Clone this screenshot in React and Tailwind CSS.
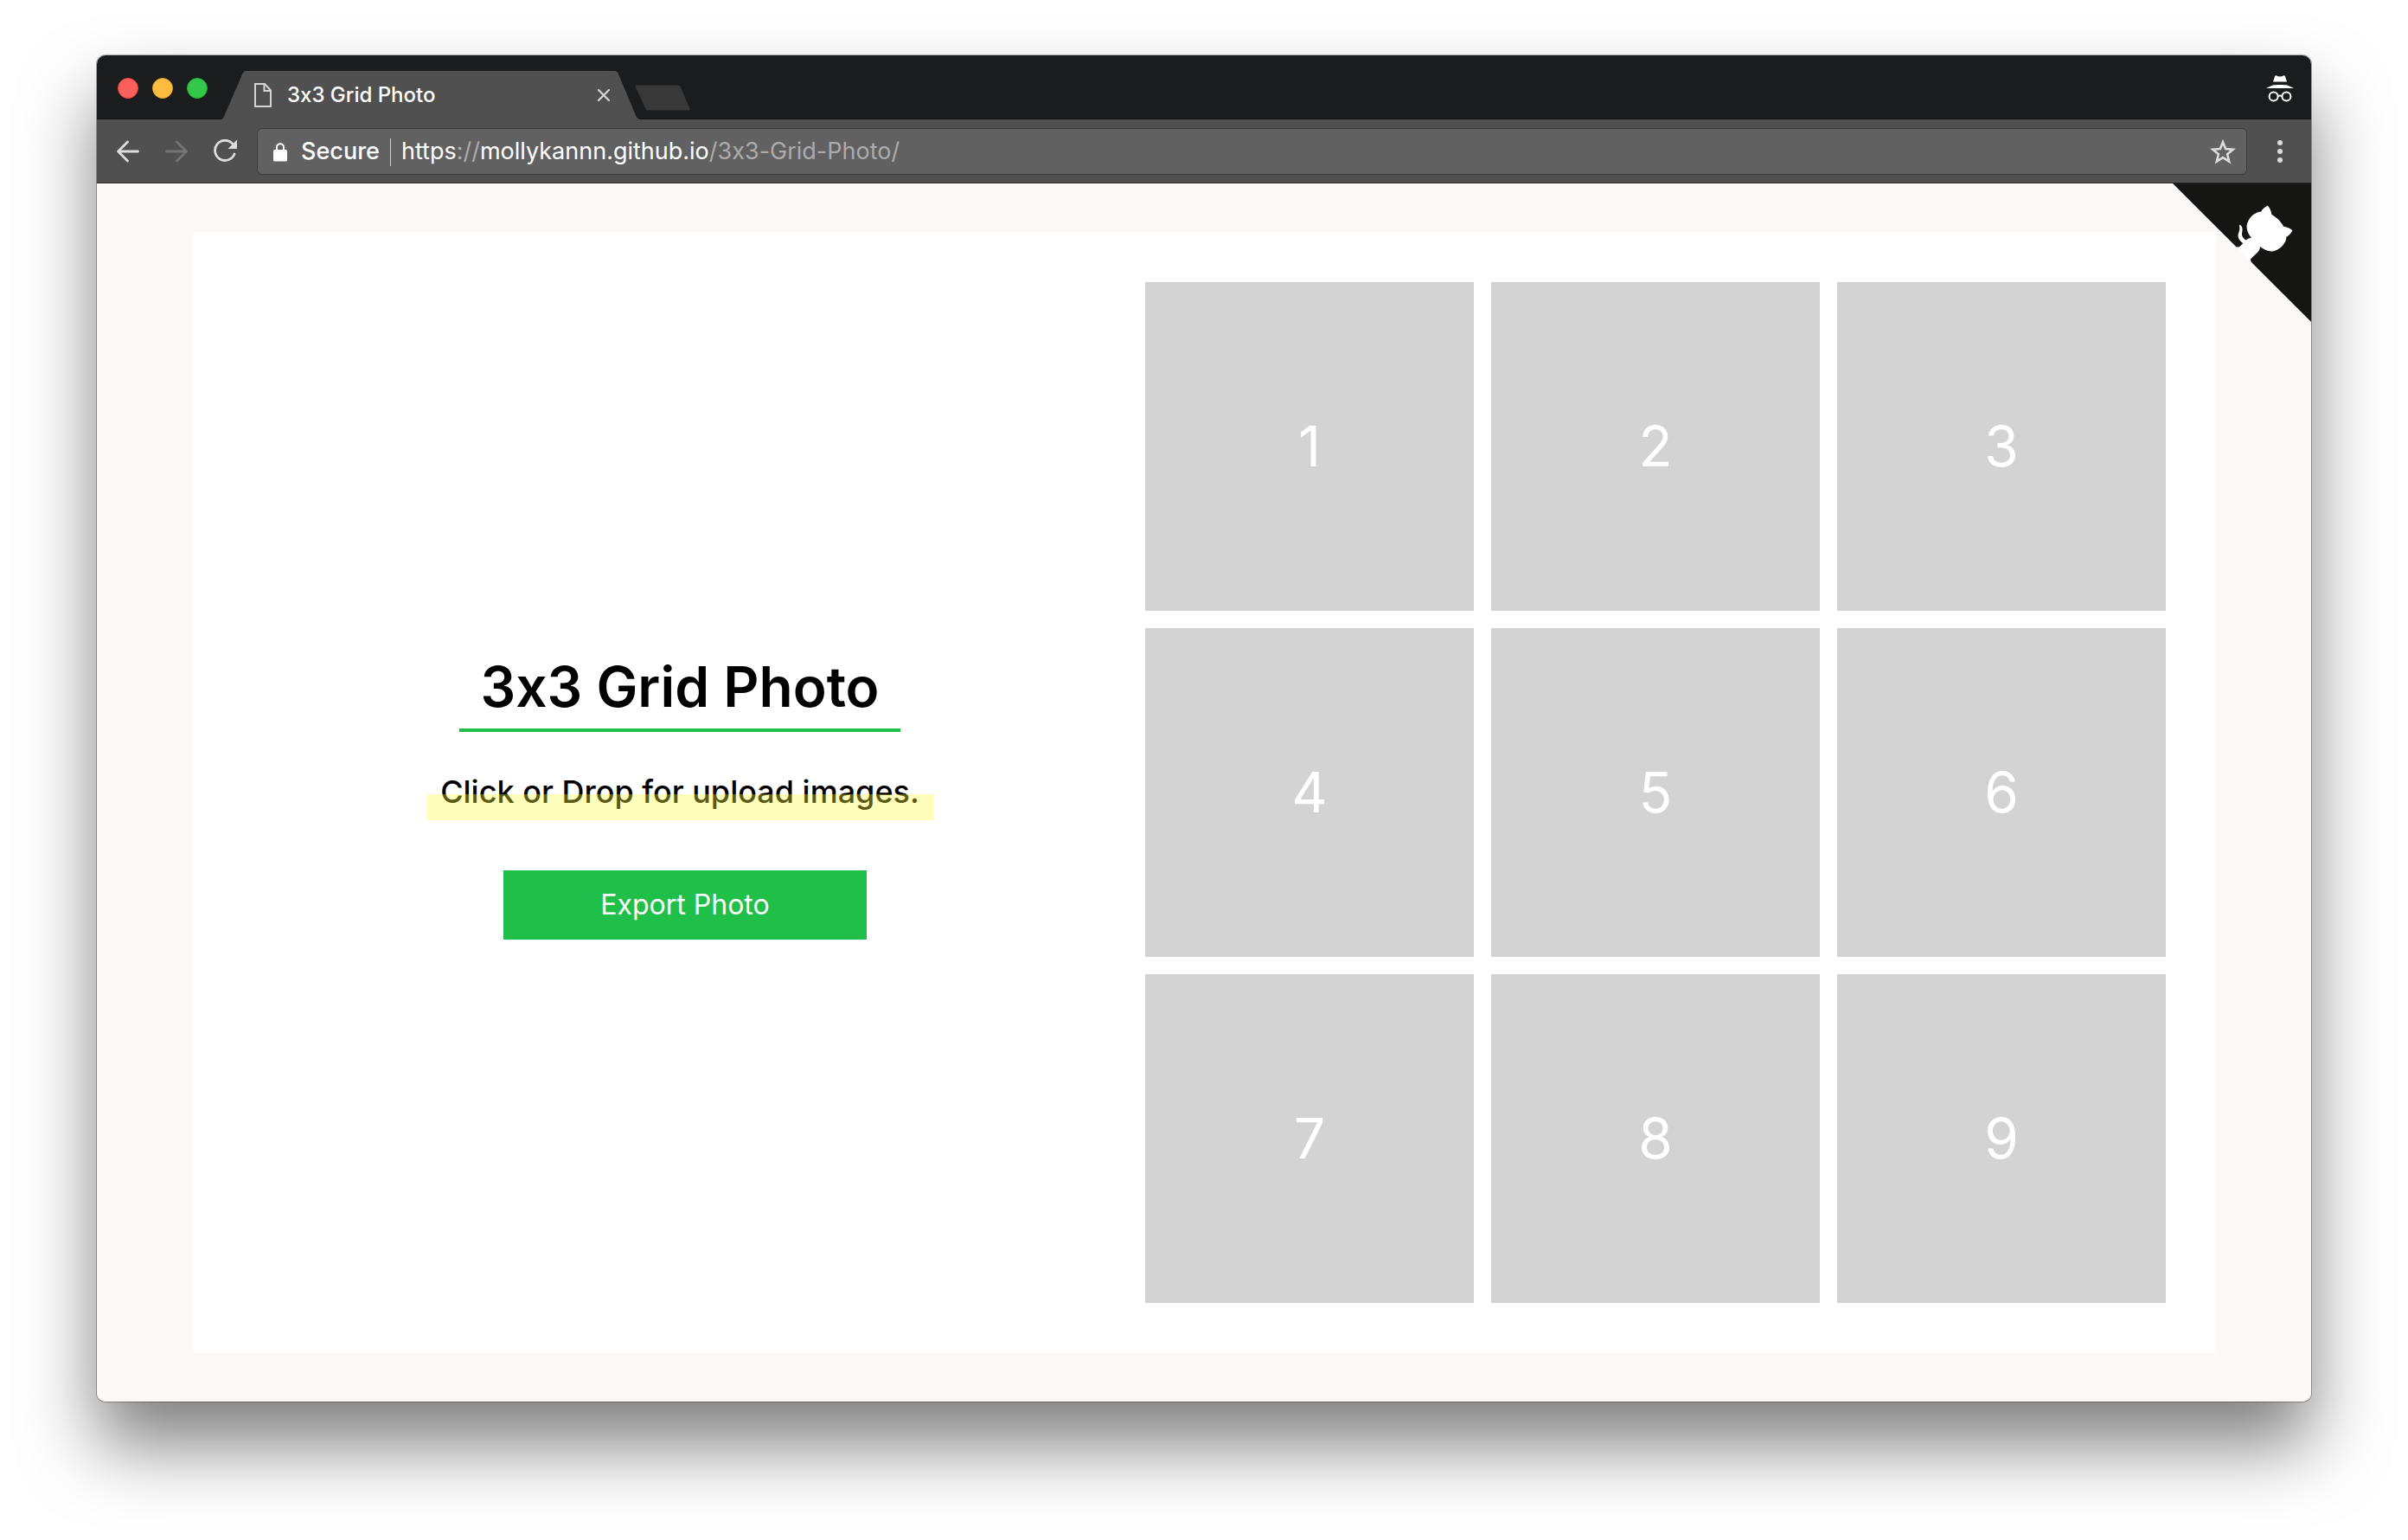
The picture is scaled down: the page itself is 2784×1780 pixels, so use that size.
import React from "react";

const cells = [1, 2, 3, 4, 5, 6, 7, 8, 9];

function TabStrip() {
  return (
    <div className="flex h-[74px] items-center bg-[#1b1c1e] pl-6 pr-5 pt-0.5 shadow-[inset_0_-1px_0_#121213]">
      <div className="flex items-center gap-4">
        <button aria-label="Close window" className="size-6 rounded-full border border-[#e0443e] bg-[#fc605c]" />
        <button aria-label="Minimize window" className="size-6 rounded-full border border-[#dea034] bg-[#fdbc40]" />
        <button aria-label="Zoom window" className="size-6 rounded-full border border-[#28a935] bg-[#34c84a]" />
      </div>

      <div className="relative ml-4 flex h-14 w-[484px] items-center self-end pl-[38px] pr-[34px]">
        <svg className="absolute inset-0 size-full" viewBox="0 0 484 56" preserveAspectRatio="none" aria-hidden="true">
          <path
            d="M0 56 Q2 55 3 52.500 L24.500 3 Q26 0 28 0 H455 Q457.500 0 458.500 2.500 L479.500 52.500 Q481 55.500 484 56 Z"
            fill="#505050"
          />
        </svg>
        <svg className="relative h-7 w-5 shrink-0" viewBox="0 0 20 28" fill="none" stroke="#d4d4d4" strokeWidth="2" aria-hidden="true">
          <path d="M1 1 H12 L19 8.500 V27 H1 Z" />
          <path d="M11.500 1 V9 H19" />
        </svg>
        <span className="relative ml-[18px] flex-1 text-2xl font-medium text-white">3x3 Grid Photo</span>
        <button aria-label="Close tab" className="relative">
          <svg className="size-4" viewBox="0 0 16 16" stroke="#d6d6d6" strokeWidth="2.200" strokeLinecap="round" aria-hidden="true">
            <path d="M2 2 L14 14 M14 2 L2 14" />
          </svg>
        </button>
      </div>

      <button aria-label="New tab" className="-ml-[6px] mt-[22px]">
        <svg className="h-[30px] w-16" viewBox="0 0 64 30" aria-hidden="true">
          <path d="M2.500 0.500 H50 Q52 0.500 53 3 L63 26.500 Q64.500 29.500 62 29.500 H15 Q13 29.500 12 27 L1 3 Q0 0.500 2.500 0.500 Z" fill="#383838" />
        </svg>
      </button>

      <svg className="ml-auto mt-0.5 h-8 w-8" viewBox="0 0 32 32" aria-hidden="true">
        <path d="M10.200 0.800 C10.500 0 11.400 0 12 0.400 C14.500 1.700 17.500 1.700 20 0.400 C20.600 0 21.500 0 21.800 0.800 L24 7.600 H8 Z" fill="#fff" />
        <path d="M7.500 11.500 C10 10.800 22 10.800 24.500 11.500 L32 15 H0 Z" fill="#fff" />
        <g fill="none" stroke="#fff" strokeWidth="2">
          <circle cx="8.600" cy="24.500" r="5" />
          <circle cx="23.400" cy="24.500" r="5" />
          <path d="M13.600 24 Q16 22.800 18.400 24" />
        </g>
      </svg>
    </div>
  );
}

function Toolbar() {
  return (
    <div className="flex h-[74px] items-center border-b border-[#262626] bg-[#505050] pl-[23px] pr-8">
      <button aria-label="Back">
        <svg className="h-[26px] w-[26px]" viewBox="0 0 26 26" fill="none" stroke="#dcdcdc" strokeWidth="2.800" strokeLinecap="round" strokeLinejoin="round" aria-hidden="true">
          <path d="M24.500 13 H2 M12.500 2 L1.600 13 L12.500 24" />
        </svg>
      </button>
      <button aria-label="Forward" className="ml-[30px]">
        <svg className="h-[26px] w-[26px]" viewBox="0 0 26 26" fill="none" stroke="#747474" strokeWidth="2.800" strokeLinecap="round" strokeLinejoin="round" aria-hidden="true">
          <path d="M1.500 13 H24 M13.500 2 L24.400 13 L13.500 24" />
        </svg>
      </button>
      <button aria-label="Reload" className="ml-[30px]">
        <svg className="h-[27px] w-[27px]" viewBox="0 0 27 27" fill="none" aria-hidden="true">
          <path d="M21.700 5 A11.600 11.600 0 1 0 24 17" stroke="#dcdcdc" strokeWidth="2.800" strokeLinecap="round" />
          <path d="M27 0.500 V11 H16.500 Z" fill="#dcdcdc" />
        </svg>
      </button>

      <div className="ml-[23px] flex h-[54px] flex-1 items-center rounded-md border border-[#3b3b3b] bg-[#616161] pl-[18px] pr-3 pt-0.5 text-[27px]">
        <svg className="h-[22px] w-4 shrink-0" viewBox="0 0 16 22" aria-hidden="true">
          <rect x="0" y="8" width="16" height="13.500" rx="1.600" fill="#fff" />
          <path d="M4 9 V5.200 A4 4 0 0 1 12 5.200 V9" fill="none" stroke="#fff" strokeWidth="2" />
        </svg>
        <span className="ml-4 font-medium text-white">Secure</span>
        <span className="ml-3 h-8 w-px bg-[#cfcfcf]" />
        <a href="https://mollykannn.github.io/3x3-Grid-Photo/" className="ml-3 text-[#ababab]">
          <span className="text-white">https</span>://<span className="text-white">mollykannn.github.io</span>/3x3-Grid-Photo/
        </a>
        <button aria-label="Bookmark this page" className="ml-auto">
          <svg className="h-[30px] w-[30px]" viewBox="0 0 30 30" fill="none" stroke="#dcdcdc" strokeWidth="2.600" aria-hidden="true">
            <path d="M15 3.200 L18.100 11 L26.600 11.700 L20.100 17.200 L22.200 25.600 L15 21.100 L7.800 25.600 L9.900 17.200 L3.400 11.700 L11.900 11 Z" />
          </svg>
        </button>
      </div>

      <button aria-label="Menu" className="ml-[34px]">
        <svg className="h-[26px] w-2" viewBox="0 0 8 26" fill="#dcdcdc" aria-hidden="true">
          <circle cx="4" cy="3" r="3" />
          <circle cx="4" cy="13" r="3" />
          <circle cx="4" cy="23" r="3" />
        </svg>
      </button>
    </div>
  );
}

function GithubCorner() {
  return (
    <a href="https://github.com/mollykannn/3x3-Grid-Photo" aria-label="View source on GitHub" className="absolute right-0 top-0">
      <svg className="size-40" viewBox="0 0 250 250" aria-hidden="true">
        <path d="M0,0 L115,115 L130,115 L142,142 L250,250 L250,0 Z" fill="#151513" />
        <path
          fill="#fff"
          d="M128.3,109.0 C113.8,99.7 119.0,89.6 119.0,89.6 C122.0,82.7 120.5,78.6 120.5,78.6 C119.2,72.0 123.4,76.3 123.4,76.3 C127.3,80.9 125.5,87.3 125.5,87.3 C122.9,97.6 130.6,101.9 134.4,103.2"
        />
        <path
          fill="#fff"
          d="M115.0,115.0 C114.9,115.1 118.7,116.5 119.8,115.4 L133.7,101.6 C136.9,99.2 139.9,98.4 142.2,98.6 C133.8,88.0 127.5,74.4 143.8,58.0 C148.5,53.4 154.0,51.2 159.7,51.0 C160.3,49.4 163.2,43.6 171.4,40.1 C171.4,40.1 176.1,42.5 178.8,56.2 C183.1,58.6 187.2,61.8 190.9,65.4 C194.5,69.0 197.7,73.2 200.1,77.6 C213.8,80.2 216.3,84.9 216.3,84.9 C212.7,93.1 206.9,96.0 205.4,96.6 C205.1,102.4 203.0,107.8 198.3,112.5 C181.9,128.9 168.3,122.5 157.7,114.1 C157.9,116.9 156.7,120.9 152.7,124.9 L141.0,136.5 C139.8,137.7 141.6,141.9 141.8,141.8 Z"
        />
      </svg>
    </a>
  );
}

export default function App() {
  return (
    <div className="min-h-screen bg-white px-28 pb-40 pt-16 font-['Inter',sans-serif] [font-variant-ligatures:no-contextual]">
      <div className="overflow-hidden rounded-[10px] shadow-[0_0_0_1px_rgba(0,0,0,0.3),0_50px_84px_rgba(0,0,0,0.5)]">
        <TabStrip />
        <Toolbar />
        <main className="relative bg-[#fcf8f5] px-[110px] py-14">
          <div className="grid grid-cols-[1012fr_1180fr] items-center gap-8 bg-white p-[58px]">
            <section className="flex flex-col items-center">
              <h1 className="border-b-4 border-[#1fbf4a] px-6 text-[64px] font-semibold leading-[96px] text-black">3x3 Grid Photo</h1>
              <p className="relative mt-[42px] px-4 text-4xl font-medium leading-[54px] text-black after:absolute after:inset-x-0 after:-bottom-[6px] after:h-[30px] after:bg-[rgba(255,255,62,0.353)]">
                Click or Drop for upload images.
              </p>
              <button className="ml-3 mt-16 h-20 w-[420px] bg-[#1fbf4a] text-[32px] text-white">Export Photo</button>
            </section>
            <section className="grid grid-cols-3 gap-5">
              {cells.map((n) => (
                <label key={n} className="flex aspect-square cursor-pointer items-center justify-center bg-[#d3d3d3] text-[64px] text-white">
                  {n}
                  <input type="file" accept="image/*" className="sr-only" />
                </label>
              ))}
            </section>
          </div>
          <GithubCorner />
        </main>
      </div>
    </div>
  );
}
